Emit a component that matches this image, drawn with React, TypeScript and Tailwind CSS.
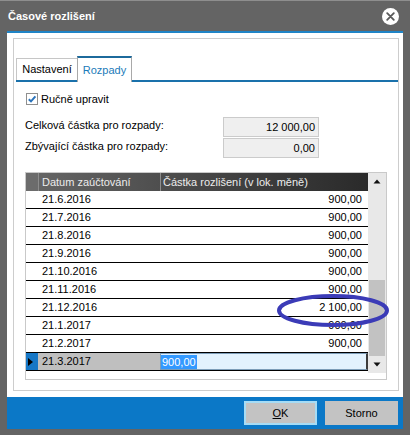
const rows: [string, string][] = [
  ['21.6.2016', '900,00'],
  ['21.7.2016', '900,00'],
  ['21.8.2016', '900,00'],
  ['21.9.2016', '900,00'],
  ['21.10.2016', '900,00'],
  ['21.11.2016', '900,00'],
  ['21.12.2016', '2 100,00'],
  ['21.1.2017', '900,00'],
  ['21.2.2017', '900,00'],
];

function Arrow({ down = false }: { down?: boolean }) {
  return (
    <svg width="8" height="5" viewBox="0 0 8 5">
      {down ? <path d="M0.5 0.5 H7.5 L4 4.5 Z" fill="#111" /> : <path d="M0.5 4.5 H7.5 L4 0.5 Z" fill="#111" />}
    </svg>
  );
}

export default function App() {
  return (
    <div className="relative w-[410px] h-[435px] overflow-hidden bg-[#646464] border-t border-[#8e8e8e] font-['Liberation_Sans',Arial,sans-serif] text-[11px] text-black">
      {/* title bar */}
      <div className="h-[30px] flex items-center justify-between pl-[8px] pr-[11px]">
        <span className="font-bold text-white text-[11px]">Časové rozlišení</span>
        <div className="w-[17px] h-[17px] rounded-full bg-white flex items-center justify-center">
          <svg width="9" height="9" viewBox="0 0 9 9">
            <path d="M1.2 1.2 L7.8 7.8 M7.8 1.2 L1.2 7.8" stroke="#5a5a5a" strokeWidth="1.8" strokeLinecap="round" />
          </svg>
        </div>
      </div>

      {/* client area */}
      <div className="mx-[7px] h-[366px] border-t-2 border-[#1f84c6] bg-white pt-[5px]">
        <div className="ml-[6px] mr-[4px] h-[353px] border border-[#cdcdcd] pt-[17px]">
          {/* tabs */}
          <div className="ml-[2px] h-[26px] flex items-end border-b-2 border-[#1a71ab]">
            <div className="w-[61px] h-[22px] border-t border-l border-[#c6c6c6] flex items-center justify-center">
              Nastavení
            </div>
            <div className="w-[55px] h-[26px] -mb-[2px] border-t-2 border-t-[#1c6a9c] border-x border-x-[#a9a9a9] bg-white flex items-center justify-center text-[#1b7bb9]">
              Rozpady
            </div>
          </div>

          {/* checkbox */}
          <div className="mt-[11px] h-[12px] pl-[12px] flex items-center gap-[3px]">
            <div className="w-[12px] h-[12px] border border-[#8f8f8f] bg-white flex items-center justify-center">
              <svg width="10" height="10" viewBox="0 0 10 10">
                <path d="M1.8 5.2 L4 7.4 L8.4 2.4" fill="none" stroke="#2a73bb" strokeWidth="2" />
              </svg>
            </div>
            <span>Ručně upravit</span>
          </div>

          {/* amounts */}
          <div className="mt-[12px] pl-[11px] flex flex-col gap-[1px]">
            <div className="h-[20px] flex items-center">
              <span className="w-[198px] -mt-[3px]">Celková částka pro rozpady:</span>
              <div className="w-[96px] h-full border border-[#cbcbcb] bg-[#efefef] flex items-center justify-end pr-[3px]">
                12 000,00
              </div>
            </div>
            <div className="h-[20px] flex items-center">
              <span className="w-[198px] -mt-[3px]">Zbývající částka pro rozpady:</span>
              <div className="w-[96px] h-full border border-[#cbcbcb] bg-[#efefef] flex items-center justify-end pr-[3px]">
                0,00
              </div>
            </div>
          </div>

          {/* grid */}
          <div className="mt-[14px] ml-[11px] w-[362px] h-[208px] border border-[#c9c9c9] flex">
            <div className="w-[342px] flex flex-col">
              <div className="h-[18px] flex text-[#ececec]">
                <div className="w-[12px] bg-[#6c6c6c]" />
                <div className="flex-1 flex bg-gradient-to-r from-[#656565] to-[#2a2a2a]">
                  <div className="w-[122px] border-l border-[#8d8d8d] pl-[3px] flex items-center">Datum zaúčtování</div>
                  <div className="flex-1 border-l border-[#8d8d8d] pl-[2px] flex items-center">Částka rozlišení (v lok. měně)</div>
                </div>
              </div>
              {rows.map(([d, v]) => (
                <div key={d} className="h-[18px] flex border-b border-black">
                  <div className="w-[12px]" />
                  <div className="w-[122px] pl-[4px] flex items-center">{d}</div>
                  <div className="flex-1 pr-[6px] flex items-center justify-end">{v}</div>
                </div>
              ))}
              <div className="h-[18px] flex border-b border-black">
                <div className="w-[12px] bg-[#1677c6] flex items-center pl-[2px]">
                  <svg width="5" height="8" viewBox="0 0 5 8">
                    <path d="M0 0 L5 4 L0 8 Z" fill="#000" />
                  </svg>
                </div>
                <div className="w-[122px] pl-[4px] bg-[#bfbfbf] flex items-center">21.3.2017</div>
                <div className="flex-1 bg-[#e3f2fd] border border-[#7d9db8] border-r-2 border-r-[#3c3c3c] flex items-center">
                  <span className="bg-[#3399ff] text-white leading-[14px] px-[1px]">900,00</span>
                </div>
              </div>
            </div>
            <div className="w-[18px] h-[200px] bg-[#e8e8e8] flex flex-col">
              <div className="h-[17px] flex items-center justify-center"><Arrow /></div>
              <div className="flex-1 px-[1px]">
                <div className="mt-[90px] h-[76px] bg-[#c2c2c2]" />
              </div>
              <div className="h-[17px] flex items-center justify-center"><Arrow down /></div>
            </div>
          </div>
        </div>
      </div>

      {/* button band */}
      <div className="mx-[7px] h-[32px] bg-[#0b78c7] flex items-center justify-end gap-[8px] pr-[5px]">
        <div className="w-[73px] h-[24px] bg-[#c3c3c3] border-2 border-[#a6dcf5] flex items-center justify-center">
          <span><span className="underline">O</span>K</span>
        </div>
        <div className="w-[73px] h-[24px] bg-[#c3c3c3] flex items-center justify-center">Storno</div>
      </div>

      {/* annotation */}
      <svg className="absolute left-[276px] top-[292px]" width="114" height="35" viewBox="0 0 114 35">
        <ellipse cx="57" cy="17.5" rx="54" ry="14.5" fill="none" stroke="#3b3bb7" strokeWidth="4" />
      </svg>
    </div>
  );
}
